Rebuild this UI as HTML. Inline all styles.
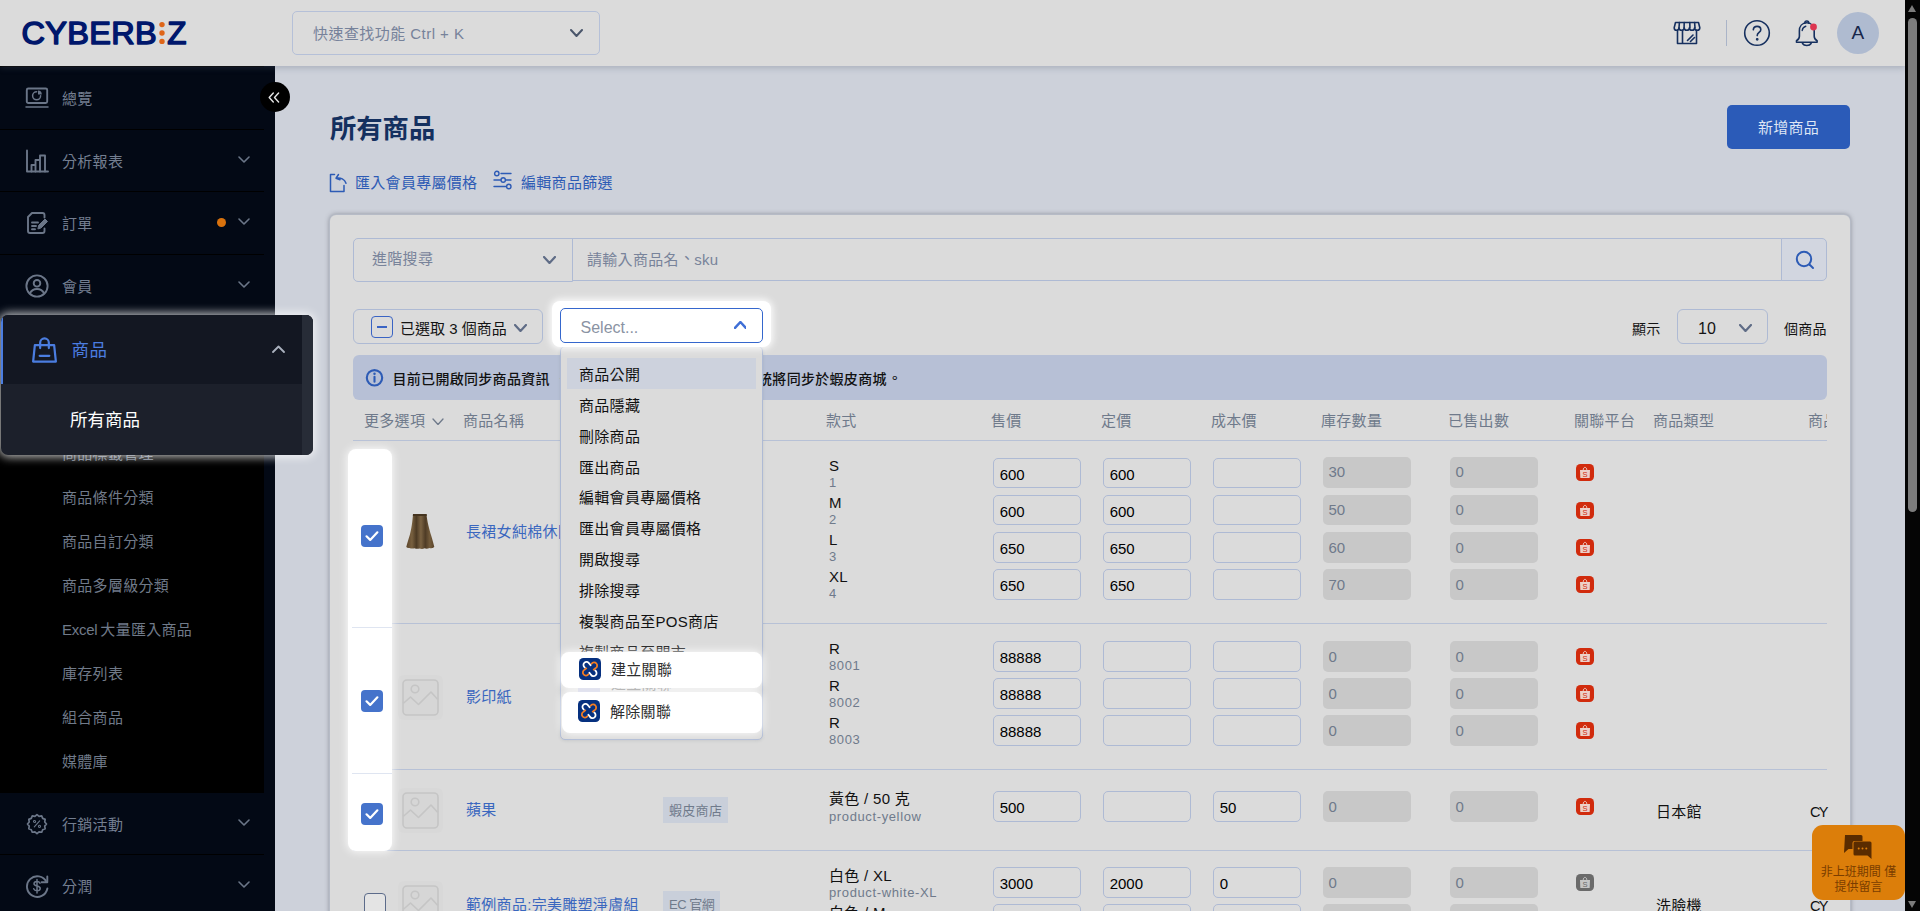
<!DOCTYPE html>
<html lang="zh-Hant">
<head>
<meta charset="utf-8">
<title>所有商品 - CYBERBIZ</title>
<style>
*{box-sizing:border-box;margin:0;padding:0}
html,body{width:1920px;height:911px;overflow:hidden;background:#cdd1da}
body{font-family:"Liberation Sans","Noto Sans CJK TC",sans-serif;font-size:15px;color:#111;position:relative;letter-spacing:.3px}
.abs{position:absolute}
svg{display:block}
.nw{white-space:nowrap}
/* header */
#hdr{position:absolute;left:0;top:0;width:1905px;height:66px;background:#dbdbdb;box-shadow:0 2px 6px rgba(80,90,110,.28);z-index:5}
#qs{position:absolute;left:292px;top:11px;width:308px;height:44px;border:1px solid #b5c0d8;border-radius:5px;color:#76829a;font-size:15px;line-height:43px;padding-left:20px;letter-spacing:.45px}
#ava{position:absolute;left:1837px;top:12px;width:42px;height:42px;border-radius:50%;background:#afbbd0;color:#16264a;font-size:19px;line-height:42px;text-align:center}
/* sidebar */
#side{position:absolute;left:0;top:66px;width:275px;height:845px;background:#030915;z-index:3}
#side .it{position:absolute;left:0;width:264px;height:63px;border-top:1px solid #000;color:#737e90;font-size:15px;letter-spacing:.3px}
#side .it .tx{position:absolute;left:62px;top:0;line-height:64.5px}
#side .it svg.ic{position:absolute;left:25px;top:19px}
#side .it svg.cv{position:absolute;left:238px;top:25px}
#sub{position:absolute;left:0;top:315px;width:264px;height:412px;background:#000}
#sub div{position:absolute;left:62px;margin-top:1px;color:#707a89;font-size:15px;letter-spacing:.3px;line-height:20px;white-space:nowrap}
#clps{position:absolute;left:260px;top:82px;width:30px;height:30px;border-radius:50%;background:#000;z-index:6}
/* scrollbar */
#sb{position:absolute;left:1905px;top:0;width:15px;height:911px;background:#050505;z-index:50}
#sb i{position:absolute;left:3px;top:18px;width:9px;height:494px;border-radius:5px;background:#7c7c7c}
#sb b{position:absolute;left:3px;width:0;height:0;border-left:4.5px solid transparent;border-right:4.5px solid transparent}
/* main */
#ttl{position:absolute;left:330px;top:109.3px;font-size:26.3px;letter-spacing:0;font-weight:700;color:#14305f;line-height:40px}
#addbtn{position:absolute;left:1727px;top:105px;width:123px;height:44px;background:#2b5bb8;border-radius:5px;color:#dfe6f5;font-size:15px;text-align:center;line-height:46px;letter-spacing:.3px}
.lnk{position:absolute;top:172px;font-size:15px;line-height:22px;color:#2d5bb5;white-space:nowrap}
#card{position:absolute;left:330px;top:215px;width:1520px;height:720px;background:#dbdbdb;border-radius:6px;box-shadow:0 0 0 1px #b6bbc6,0 0 4px 1px rgba(85,90,102,.5)}
.gray{color:#6f7a8b}
/* search row */
#adv{position:absolute;left:353px;top:238px;width:220px;height:44px;border:1px solid #aebad4;border-radius:5px 0 0 5px;color:#78839a;font-size:15px;line-height:40.5px;padding-left:18px}
#sin{position:absolute;left:572px;top:238px;width:1210px;height:43px;border:1px solid #aebad4;border-left:none;color:#78839a;font-size:15px;line-height:41px;padding-left:15px}
#sbtn{position:absolute;left:1781px;top:238px;width:46px;height:43px;border:1px solid #aebad4;border-radius:0 5px 5px 0;background:#d2d6e0}
/* toolbar */
#selbtn{position:absolute;left:353px;top:309px;width:190px;height:35px;border:1px solid #aebad4;border-radius:6px;font-size:15px;line-height:38px;letter-spacing:0;color:#141414;white-space:nowrap}
#pp{position:absolute;left:1677px;top:309px;width:91px;height:35px;border:1px solid #aebad4;border-radius:6px;font-size:16px;line-height:37.5px;padding-left:20px;letter-spacing:0;color:#141414}
.tl{position:absolute;top:318px;font-size:14px;line-height:22px;color:#141414;white-space:nowrap}
#ban{position:absolute;left:353px;top:355px;width:1474px;height:45px;border-radius:6px;background:#b7c0d6;font-size:14px;font-weight:500;color:#111;line-height:48.5px;white-space:nowrap;overflow:hidden}
/* table */
.th{position:absolute;top:409.8px;font-size:15px;line-height:22px;color:#6f7a8b;white-space:nowrap}
.hl{position:absolute;left:353px;width:1474px;height:1px;background:#b7c1d6}
.inp{position:absolute;width:88px;height:30px;border:1px solid #aebad4;border-radius:5px;font-size:15px;line-height:31px;padding-left:5.7px;letter-spacing:0;color:#000;white-space:nowrap}
.dis{position:absolute;width:88px;height:30px;border-radius:5px;background:#c8c8c8;font-size:15px;line-height:31px;padding-left:5.5px;letter-spacing:0;color:#6f7a8b}
.vn{position:absolute;left:829px;font-size:15px;line-height:18px;color:#111;white-space:nowrap}
.vs{position:absolute;left:829px;font-size:13px;line-height:16px;color:#6f7a8b;white-space:nowrap;letter-spacing:.62px}
.pn{position:absolute;left:466px;font-size:15px;line-height:22px;color:#3a67bf;white-space:nowrap}
.tag{position:absolute;height:26px;background:#c9cfda;color:#6f7a8b;font-size:13px;line-height:27px;padding:0 6px;white-space:nowrap}
.shp{position:absolute;left:1576px;width:18px;height:17px;border-radius:4.5px;background:#d12b0d;letter-spacing:0}
.shp.off{background:#6a6a6a}
.ph{position:absolute;left:397.5px;width:45px;height:45px;border-radius:6px;background:#d8d8d8}
.cb{position:absolute;left:361px;width:22px;height:22px;border-radius:4px;background:#4573cb}
.cbe{position:absolute;left:364px;width:22px;height:22px;border-radius:4px;border:1.5px solid #5c6b8a;background:#e4e4e4}
.tc{position:absolute;margin-top:1px;font-size:15px;line-height:22px;color:#111;white-space:nowrap}
/* dropdown */
#hlsel{position:absolute;left:551.5px;top:300.5px;width:219px;height:46px;border-radius:8px;background:#fff;box-shadow:0 0 7px 2px rgba(255,255,255,.9);z-index:22}
#sel{position:absolute;left:560px;top:308px;width:203px;height:35px;border:1.5px solid #3567cd;border-radius:5px;background:#fff;z-index:23;font-size:16px;line-height:38px;padding-left:19.5px;color:#8a93a3;letter-spacing:0}
#menu{position:absolute;left:560px;top:346px;width:203px;height:394px;border:1px solid #aebad4;border-radius:5px;background:#dbdbdb;z-index:21;overflow:hidden;box-shadow:0 1px 3px rgba(60,70,90,.12)}
#menu .op{position:absolute;left:6px;width:189px;height:31px;font-size:15px;line-height:33px;padding-left:12px;color:#111;white-space:nowrap}
.hlop{position:absolute;left:561px;width:201px;border-radius:8px;background:#fff;box-shadow:0 0 8px 1px rgba(255,255,255,.85);z-index:23;font-size:15px;color:#2e2e2e;white-space:nowrap}
#hlcol{position:absolute;left:348px;top:449px;width:44px;height:402px;border-radius:8px;background:#fff;box-shadow:0 0 8px 1px rgba(255,255,255,.85);z-index:12}
#hlside{position:absolute;left:.5px;top:315px;width:312.5px;height:140px;border-radius:7px;background:#1c202b;box-shadow:0 0 10px 2px rgba(255,255,255,.75);z-index:30;overflow:hidden}
/* chat */
#chat{position:absolute;left:1812px;top:825px;width:93px;height:75px;border-radius:11px;background:#dc7e0a;z-index:40;color:#7a3d00;font-size:12px;line-height:15.3px;text-align:center;letter-spacing:0}
.pc{position:relative;left:.08em;top:-.1em}.pc3{position:relative;left:.36em;top:-.25em}.pc2{position:relative;left:.05em;top:-.13em}
</style>
</head>
<body>

<div id="hdr">
  <svg class="abs" style="left:18px;top:14px" width="176" height="40" viewBox="0 0 176 40">
    <text x="3.6" y="30.4" font-family="Liberation Sans, sans-serif" font-weight="400" font-size="31.5" fill="#00176c" stroke="#00176c" stroke-width="1.5" stroke-linejoin="round" textLength="135.5" lengthAdjust="spacingAndGlyphs">CYBERB</text>
    <circle cx="144" cy="10.6" r="2.7" fill="#df6518"/><circle cx="144" cy="19" r="2.7" fill="#df6518"/><circle cx="144" cy="27.4" r="2.7" fill="#df6518"/>
    <text x="149.3" y="30.4" font-family="Liberation Sans, sans-serif" font-weight="400" font-size="31.5" fill="#00176c" stroke="#00176c" stroke-width="1.5" stroke-linejoin="round" textLength="19.5" lengthAdjust="spacingAndGlyphs">Z</text>
  </svg>
  <div id="qs">快速查找功能 Ctrl + K</div>
  <svg class="abs " style="left:570px;top:29px;" width="13" height="8" viewBox="0 0 13 8"><path d="M1 1 L6.5 7 L12 1" fill="none" stroke="#4a566b" stroke-width="2" stroke-linecap="round" stroke-linejoin="round"/></svg>
  <!-- store icon -->
  <svg class="abs" style="left:1673px;top:21px" width="28" height="24" viewBox="0 0 28 24" fill="none" stroke="#16305f" stroke-width="1.6" stroke-linejoin="round" stroke-linecap="round">
    <path d="M2.5 1.5h23l1.3 5.2c0 1.6-1.3 2.6-2.6 2.6s-2.6-1-2.6-2.6c0 1.6-1.3 2.6-2.6 2.6s-2.6-1-2.6-2.6c0 1.6-1.3 2.6-2.6 2.6s-2.6-1-2.6-2.6c0 1.6-1.3 2.6-2.6 2.6s-2.6-1-2.6-2.6c0 1.6-1.3 2.6-2.6 2.6S1.2 8.3 1.2 6.7z"/>
    <path d="M6.4 1.5 6 6.7M11.2 1.5 11.1 6.7M16.8 1.5 16.9 6.7M21.6 1.5 22 6.7"/>
    <path d="M4.5 9.5v13h19v-13M4.5 22.5h19M9.5 10v12.5"/>
    <path d="M14.5 19.5l5.5-5.5M17.5 20.5l4-4"/>
  </svg>
  <div class="abs" style="left:1726px;top:20px;width:1px;height:26px;background:#aab4c8"></div>
  <!-- help -->
  <svg class="abs" style="left:1743px;top:19px" width="28" height="28" viewBox="0 0 28 28" fill="none" stroke="#16305f" stroke-width="1.6" stroke-linecap="round">
    <circle cx="14" cy="14" r="12.3"/>
    <path d="M10.3 10.8c.2-2.1 1.7-3.4 3.8-3.4 2.2 0 3.7 1.4 3.7 3.3 0 2.7-3.6 2.9-3.6 5.9"/>
    <circle cx="14.2" cy="20.3" r=".6" fill="#16305f"/>
  </svg>
  <!-- bell -->
  <svg class="abs" style="left:1793px;top:19px" width="28" height="30" viewBox="0 0 28 30" fill="none" stroke="#16305f" stroke-width="1.6" stroke-linecap="round" stroke-linejoin="round">
    <path d="M11.8 4.2c0-1.4.9-2.2 2-2.2s2 .8 2 2.2"/>
    <path d="M13.8 3.8c-4.8 0-7.4 3.6-7.4 8v5.4c0 1.9-1.2 3.6-2.9 4.6v1.4h20.6v-1.4c-1.7-1-2.9-2.7-2.9-4.6v-5.4c0-4.4-2.6-8-7.4-8z"/>
    <path d="M9.5 24.5c.8 1.3 2.4 2 4.3 2s3.5-.7 4.3-2"/>
    <path d="M9.2 11.5c.3-2.2 1.6-3.8 3.6-4.3" stroke-width="1.4"/>
    <circle cx="20.5" cy="8" r="3.4" fill="#dc3550" stroke="none"/>
  </svg>
  <div id="ava">A</div>
</div>


<div id="side">
  <div class="it" style="top:0px"><svg class="ic" width="24" height="24" viewBox="0 0 24 24" fill="none" stroke="#6b7688" stroke-width="1.9" stroke-linecap="round" stroke-linejoin="round" ><rect x="1.8" y="2.5" width="20.4" height="14.5" rx="1.5"/><path d="M1 21h22" stroke-width="1.5"/><path d="M11.6 5.8a4 4 0 1 0 4 4" stroke-width="1.5"/><path d="M13 4.6a3.8 3.8 0 0 1 3.8 3.8H13z" fill="#6b7688" stroke="none"/></svg><span class="tx">總覽</span></div>
  <div class="it" style="top:63px"><svg class="ic" width="24" height="24" viewBox="0 0 24 24" fill="none" stroke="#6b7688" stroke-width="1.9" stroke-linecap="round" stroke-linejoin="round" ><path d="M2 1.5v21h21"/><path d="M6.5 22.5v-6.5h4v6.5M10.5 22.5v-11.5h4.5v11.5M15 22.5v-16h5v16" /></svg><span class="tx">分析報表</span><svg class="abs " style="left:238px;top:26px;" width="12" height="7" viewBox="0 0 12 7"><path d="M1 1 L6 6 L11 1" fill="none" stroke="#6b7688" stroke-width="1.6" stroke-linecap="round" stroke-linejoin="round"/></svg></div>
  <div class="it" style="top:125px"><svg class="ic" width="24" height="24" viewBox="0 0 24 24" fill="none" stroke="#6b7688" stroke-width="1.9" stroke-linecap="round" stroke-linejoin="round" ><path d="M19.5 6.5v-2.5a2 2 0 0 0-2-2h-10.5l-4 4v14a2 2 0 0 0 2 2h12.5a2 2 0 0 0 2-2v-2.5"/><path d="M7 11.5h6M7 15h4M7 18.3h3" stroke-width="1.9"/><path d="M13 17.5l.7-3.2 6.3-6.3 2.5 2.5-6.3 6.3z" fill="#6b7688" stroke-width="1"/></svg><span class="tx">訂單</span><i class="abs" style="left:216.5px;top:26px;width:9px;height:9px;border-radius:50%;background:#d9720d"></i><svg class="abs " style="left:238px;top:26px;" width="12" height="7" viewBox="0 0 12 7"><path d="M1 1 L6 6 L11 1" fill="none" stroke="#6b7688" stroke-width="1.6" stroke-linecap="round" stroke-linejoin="round"/></svg></div>
  <div class="it" style="top:188px"><svg class="ic" width="24" height="24" viewBox="0 0 24 24" fill="none" stroke="#6b7688" stroke-width="1.9" stroke-linecap="round" stroke-linejoin="round" ><circle cx="12" cy="12" r="10.6"/><circle cx="12" cy="9.3" r="3.3"/><path d="M4.8 19.5c1.5-3 4-4.5 7.2-4.5s5.7 1.5 7.2 4.5"/></svg><span class="tx">會員</span><svg class="abs " style="left:238px;top:26px;" width="12" height="7" viewBox="0 0 12 7"><path d="M1 1 L6 6 L11 1" fill="none" stroke="#6b7688" stroke-width="1.6" stroke-linecap="round" stroke-linejoin="round"/></svg></div>
  <div class="it" style="top:251px"><span class="tx">商品</span><svg class="abs " style="left:238px;top:26px;" width="12" height="7" viewBox="0 0 12 7"><path d="M1 1 L6 6 L11 1" fill="none" stroke="#6b7688" stroke-width="1.6" stroke-linecap="round" stroke-linejoin="round"/></svg></div>
  <div id="sub"><div style="top:62px">商品標籤管理</div><div style="top:106px">商品條件分類</div><div style="top:150px">商品自訂分類</div><div style="top:194px">商品多層級分類</div><div style="top:238px"><span style="letter-spacing:-.25px;word-spacing:-1px">Excel </span>大量匯入商品</div><div style="top:282px">庫存列表</div><div style="top:326px">組合商品</div><div style="top:370px">媒體庫</div></div>
  <div class="it" style="top:726px"><svg class="ic" width="24" height="24" viewBox="0 0 24 24" fill="none" stroke="#6b7688" stroke-width="1.9" stroke-linecap="round" stroke-linejoin="round" ><g transform="translate(1.3 1.2) scale(.89)"><path d="M12 1.5l2.3 2 3-.5 1.1 2.8 2.8 1.1-.5 3 2 2.3-2 2.3.5 3-2.8 1.1-1.1 2.8-3-.5-2.3 2-2.3-2-3 .5-1.1-2.8-2.8-1.1.5-3-2-2.3 2-2.3-.5-3 2.8-1.1 1.1-2.8 3 .5z"/><path d="M9 15.3l6-6.6" stroke-width="1.3"/><circle cx="9.3" cy="9.3" r="1.2" stroke-width="1.2"/><circle cx="14.8" cy="14.8" r="1.2" stroke-width="1.2"/></g></svg><span class="tx">行銷活動</span><svg class="abs " style="left:238px;top:26px;" width="12" height="7" viewBox="0 0 12 7"><path d="M1 1 L6 6 L11 1" fill="none" stroke="#6b7688" stroke-width="1.6" stroke-linecap="round" stroke-linejoin="round"/></svg></div>
  <div class="it" style="top:788px"><svg class="ic" width="24" height="24" viewBox="0 0 24 24" fill="none" stroke="#6b7688" stroke-width="1.9" stroke-linecap="round" stroke-linejoin="round" ><path d="M21.5 8a10.3 10.3 0 1 0 .9 6.5"/><path d="M22.3 2.5v5.8h-5.8" /><path d="M15 9.3c-.5-1.2-1.6-1.8-3-1.8-1.7 0-3 .9-3 2.3 0 3 6.2 1.4 6.2 4.6 0 1.4-1.4 2.3-3.2 2.3-1.6 0-2.8-.7-3.3-2M12 5.5v13.5" stroke-width="1.5"/></svg><span class="tx">分潤</span><svg class="abs " style="left:238px;top:26px;" width="12" height="7" viewBox="0 0 12 7"><path d="M1 1 L6 6 L11 1" fill="none" stroke="#6b7688" stroke-width="1.6" stroke-linecap="round" stroke-linejoin="round"/></svg></div>
</div>
<div id="clps"><svg class="abs" style="left:8.3px;top:9.5px" width="12" height="11" viewBox="0 0 12 11" fill="none" stroke="#e6e6e6" stroke-width="1.4" stroke-linecap="round" stroke-linejoin="round"><path d="M5.3 1 1.2 5.5l4.1 4.5M10.6 1 6.5 5.5l4.1 4.5"/></svg></div>
<div id="hlside">
  <div class="abs" style="left:0;top:0;width:312px;height:69px;background:#131722"></div>
  <div class="abs" style="left:301px;top:0;width:11px;height:140px;background:#272c37"></div>
  <div class="abs" style="left:-.5px;top:0;width:3px;height:69px;background:#4b7de0"></div>
  <svg class="abs" style="left:30.5px;top:21.5px" width="27" height="27" viewBox="0 0 28 28" fill="none" stroke="#4b7de0" stroke-width="2.3" stroke-linejoin="round" stroke-linecap="round"><path d="M4 8.5h20l1.8 17h-23.6z"/><path d="M9.5 11.5v-5.5a4.5 4.5 0 0 1 9 0v5.5"/><path d="M9 19.5h10"/></svg>
  <div class="abs nw" style="left:71px;top:21.3px;font-size:17.5px;line-height:28px;color:#4b7de0;letter-spacing:.5px">商品</div>
  <svg class="abs" style="left:271px;top:30px" width="13" height="8" viewBox="0 0 13 8"><path d="M1 7 6.5 1.5 12 7" fill="none" stroke="#aab1be" stroke-width="1.8" stroke-linecap="round" stroke-linejoin="round"/></svg>
  <div class="abs nw" style="left:69.5px;top:91px;font-size:17.5px;line-height:28px;color:#fff;letter-spacing:0">所有商品</div>
</div>
<div id="sb"><b style="top:5px;border-bottom:7px solid #7c7c7c"></b><i></i><b style="top:900.5px;border-top:7px solid #7c7c7c"></b></div>


<div id="ttl">所有商品</div>
<div id="addbtn">新增商品</div>
<svg class="abs" style="left:329px;top:172px" width="19" height="21" viewBox="0 0 19 21" fill="none" stroke="#2d5bb5" stroke-width="1.5" stroke-linecap="round" stroke-linejoin="round"><path d="M5.5 2.5h-4v17h13.5v-6"/><path d="M9.5 2.5l-2.5 3.7 4 1.6M7.2 6.2c4.5-1 8.5 1.2 9.8 5"/></svg>
<div class="lnk" style="left:355px">匯入會員專屬價格</div>
<svg class="abs" style="left:493px;top:170px" width="20" height="20" viewBox="0 0 20 20" fill="none" stroke="#2d5bb5" stroke-width="1.4" stroke-linecap="round"><circle cx="3.8" cy="3.5" r="2.2"/><path d="M8 3.5h10M1 10h6.5M13 10h5M1 16.5h12"/><circle cx="10.2" cy="10" r="2.2"/><circle cx="15.8" cy="16.5" r="2.2"/></svg>
<div class="lnk" style="left:521px">編輯商品篩選</div>
<div id="card"></div>
<div id="adv">進階搜尋</div><svg class="abs " style="left:543px;top:256px;" width="13" height="8" viewBox="0 0 13 8"><path d="M1 1 L6.5 7 L12 1" fill="none" stroke="#5f6c86" stroke-width="2.2" stroke-linecap="round" stroke-linejoin="round"/></svg>
<div id="sin">請輸入商品名<span class="pc2">、</span>sku</div>
<div id="sbtn"><svg class="abs" style="left:12px;top:10px" width="22" height="22" viewBox="0 0 22 22" fill="none" stroke="#2d5bb5" stroke-width="2" stroke-linecap="round"><circle cx="10" cy="10" r="7.2"/><path d="M15.5 15.5l3.5 3.5"/></svg></div>
<div id="selbtn"><span class="abs" style="left:17px;top:6px;width:22px;height:22px;border:1.5px solid #3a64c4;border-radius:4px"></span><span class="abs" style="left:23px;top:16px;width:10px;height:2px;background:#3a64c4"></span><span class="abs" style="left:46px;top:0">已選取 3 個商品</span><svg class="abs " style="left:160px;top:14px;" width="13" height="8" viewBox="0 0 13 8"><path d="M1 1 L6.5 7 L12 1" fill="none" stroke="#5f6c86" stroke-width="2.2" stroke-linecap="round" stroke-linejoin="round"/></svg></div>
<div class="tl" style="left:1632px;margin-top:-.5px">顯示</div>
<div id="pp">10</div><svg class="abs " style="left:1738.5px;top:324px;" width="13" height="8" viewBox="0 0 13 8"><path d="M1 1 L6.5 7 L12 1" fill="none" stroke="#5f6c86" stroke-width="2.2" stroke-linecap="round" stroke-linejoin="round"/></svg>
<div class="tl" style="left:1784px">個商品</div>
<div id="ban"><svg class="abs" style="left:12px;top:13px" width="19" height="19" viewBox="0 0 19 19" fill="none" stroke="#2d5bb5" stroke-width="2.1"><circle cx="9.5" cy="9.8" r="7.7"/><path d="M9.5 8.8v5" stroke-linecap="round" stroke-width="2.1"/><circle cx="9.5" cy="5.7" r="1.25" fill="#2d5bb5" stroke="none"/></svg><span class="abs" style="left:39.5px;top:0">目前已開啟同步商品資訊<span style="letter-spacing:-.12px"><span class="pc3">，</span>商品內容如有更新或異動時，系</span>統將同步於蝦皮商城<span class="pc">。</span></span></div>
<div class="th" style="left:364px">更多選項</div><svg class="abs " style="left:431.5px;top:417.5px;" width="12" height="7.5" viewBox="0 0 12 7.5"><path d="M1 1 L6 6.5 L11 1" fill="none" stroke="#6f7a8b" stroke-width="1.3" stroke-linecap="round" stroke-linejoin="round"/></svg>
<div class="th" style="left:463px">商品名稱</div>
<div class="th" style="left:826px">款式</div>
<div class="th" style="left:991px">售價</div>
<div class="th" style="left:1101px">定價</div>
<div class="th" style="left:1211px">成本價</div>
<div class="th" style="left:1321px">庫存數量</div>
<div class="th" style="left:1448px">已售出數</div>
<div class="th" style="left:1574px">關聯平台</div>
<div class="th" style="left:1653px">商品類型</div>
<div class="th" style="left:1808px;width:19px;overflow:hidden">商品廠商</div>
<div class="hl" style="top:440px"></div>
<div class="hl" style="top:623px"></div>
<div class="hl" style="top:769px"></div>
<div class="hl" style="top:850px"></div>
<div class="vn" style="top:456.5px">S</div><div class="vs" style="top:474.8px">1</div><div class="inp" style="left:993px;top:458px">600</div><div class="inp" style="left:1103px;top:458px">600</div><div class="inp" style="left:1213px;top:458px"></div><div class="dis" style="left:1323px;top:458px;height:31px;margin-top:-1px;line-height:30.8px">30</div><div class="dis" style="left:1450px;top:458px;height:31px;margin-top:-1px;line-height:30.8px">0</div><div class="shp" style="top:463.9px"><svg width="18" height="17" viewBox="0 0 18 17"><path d="M4 6.1h10l-.3 7.3a.6.6 0 0 1-.6.6H4.9a.6.6 0 0 1-.6-.6z" fill="#ecd0c9"/><path d="M7.2 6.3c0-1.9.7-2.9 1.8-2.9s1.8 1 1.8 2.9" fill="none" stroke="#ecd0c9" stroke-width=".9"/><text x="9" y="12.9" font-size="7.6" font-weight="400" text-anchor="middle" fill="#d12b0d" font-family="Liberation Sans, sans-serif">S</text></svg></div><div class="vn" style="top:493.5px">M</div><div class="vs" style="top:511.8px">2</div><div class="inp" style="left:993px;top:495px">600</div><div class="inp" style="left:1103px;top:495px">600</div><div class="inp" style="left:1213px;top:495px"></div><div class="dis" style="left:1323px;top:495px;height:30px;margin-top:0px;line-height:30.8px">50</div><div class="dis" style="left:1450px;top:495px;height:30px;margin-top:0px;line-height:30.8px">0</div><div class="shp" style="top:501.5px"><svg width="18" height="17" viewBox="0 0 18 17"><path d="M4 6.1h10l-.3 7.3a.6.6 0 0 1-.6.6H4.9a.6.6 0 0 1-.6-.6z" fill="#ecd0c9"/><path d="M7.2 6.3c0-1.9.7-2.9 1.8-2.9s1.8 1 1.8 2.9" fill="none" stroke="#ecd0c9" stroke-width=".9"/><text x="9" y="12.9" font-size="7.6" font-weight="400" text-anchor="middle" fill="#d12b0d" font-family="Liberation Sans, sans-serif">S</text></svg></div><div class="vn" style="top:530.5px">L</div><div class="vs" style="top:548.8px">3</div><div class="inp" style="left:993px;top:532px;height:31px">650</div><div class="inp" style="left:1103px;top:532px;height:31px">650</div><div class="inp" style="left:1213px;top:532px;height:31px"></div><div class="dis" style="left:1323px;top:532px;height:31px;margin-top:0px;line-height:31.8px">60</div><div class="dis" style="left:1450px;top:532px;height:31px;margin-top:0px;line-height:31.8px">0</div><div class="shp" style="top:539px"><svg width="18" height="17" viewBox="0 0 18 17"><path d="M4 6.1h10l-.3 7.3a.6.6 0 0 1-.6.6H4.9a.6.6 0 0 1-.6-.6z" fill="#ecd0c9"/><path d="M7.2 6.3c0-1.9.7-2.9 1.8-2.9s1.8 1 1.8 2.9" fill="none" stroke="#ecd0c9" stroke-width=".9"/><text x="9" y="12.9" font-size="7.6" font-weight="400" text-anchor="middle" fill="#d12b0d" font-family="Liberation Sans, sans-serif">S</text></svg></div><div class="vn" style="top:567.5px">XL</div><div class="vs" style="top:585.8px">4</div><div class="inp" style="left:993px;top:569px;height:31px">650</div><div class="inp" style="left:1103px;top:569px;height:31px">650</div><div class="inp" style="left:1213px;top:569px;height:31px"></div><div class="dis" style="left:1323px;top:569px;height:31px;margin-top:0px;line-height:31.8px">70</div><div class="dis" style="left:1450px;top:569px;height:31px;margin-top:0px;line-height:31.8px">0</div><div class="shp" style="top:576px"><svg width="18" height="17" viewBox="0 0 18 17"><path d="M4 6.1h10l-.3 7.3a.6.6 0 0 1-.6.6H4.9a.6.6 0 0 1-.6-.6z" fill="#ecd0c9"/><path d="M7.2 6.3c0-1.9.7-2.9 1.8-2.9s1.8 1 1.8 2.9" fill="none" stroke="#ecd0c9" stroke-width=".9"/><text x="9" y="12.9" font-size="7.6" font-weight="400" text-anchor="middle" fill="#d12b0d" font-family="Liberation Sans, sans-serif">S</text></svg></div><div class="vn" style="top:639.5px">R</div><div class="vs" style="top:657.8px">8001</div><div class="inp" style="left:993px;top:641px;height:31px">88888</div><div class="inp" style="left:1103px;top:641px;height:31px"></div><div class="inp" style="left:1213px;top:641px;height:31px"></div><div class="dis" style="left:1323px;top:641px;height:31px;margin-top:0px;line-height:31.8px">0</div><div class="dis" style="left:1450px;top:641px;height:31px;margin-top:0px;line-height:31.8px">0</div><div class="shp" style="top:648px"><svg width="18" height="17" viewBox="0 0 18 17"><path d="M4 6.1h10l-.3 7.3a.6.6 0 0 1-.6.6H4.9a.6.6 0 0 1-.6-.6z" fill="#ecd0c9"/><path d="M7.2 6.3c0-1.9.7-2.9 1.8-2.9s1.8 1 1.8 2.9" fill="none" stroke="#ecd0c9" stroke-width=".9"/><text x="9" y="12.9" font-size="7.6" font-weight="400" text-anchor="middle" fill="#d12b0d" font-family="Liberation Sans, sans-serif">S</text></svg></div><div class="vn" style="top:676.5px">R</div><div class="vs" style="top:694.8px">8002</div><div class="inp" style="left:993px;top:678px;height:31px">88888</div><div class="inp" style="left:1103px;top:678px;height:31px"></div><div class="inp" style="left:1213px;top:678px;height:31px"></div><div class="dis" style="left:1323px;top:678px;height:31px;margin-top:0px;line-height:31.8px">0</div><div class="dis" style="left:1450px;top:678px;height:31px;margin-top:0px;line-height:31.8px">0</div><div class="shp" style="top:685px"><svg width="18" height="17" viewBox="0 0 18 17"><path d="M4 6.1h10l-.3 7.3a.6.6 0 0 1-.6.6H4.9a.6.6 0 0 1-.6-.6z" fill="#ecd0c9"/><path d="M7.2 6.3c0-1.9.7-2.9 1.8-2.9s1.8 1 1.8 2.9" fill="none" stroke="#ecd0c9" stroke-width=".9"/><text x="9" y="12.9" font-size="7.6" font-weight="400" text-anchor="middle" fill="#d12b0d" font-family="Liberation Sans, sans-serif">S</text></svg></div><div class="vn" style="top:713.5px">R</div><div class="vs" style="top:731.8px">8003</div><div class="inp" style="left:993px;top:715px;height:31px">88888</div><div class="inp" style="left:1103px;top:715px;height:31px"></div><div class="inp" style="left:1213px;top:715px;height:31px"></div><div class="dis" style="left:1323px;top:715px;height:31px;margin-top:0px;line-height:31.8px">0</div><div class="dis" style="left:1450px;top:715px;height:31px;margin-top:0px;line-height:31.8px">0</div><div class="shp" style="top:722px"><svg width="18" height="17" viewBox="0 0 18 17"><path d="M4 6.1h10l-.3 7.3a.6.6 0 0 1-.6.6H4.9a.6.6 0 0 1-.6-.6z" fill="#ecd0c9"/><path d="M7.2 6.3c0-1.9.7-2.9 1.8-2.9s1.8 1 1.8 2.9" fill="none" stroke="#ecd0c9" stroke-width=".9"/><text x="9" y="12.9" font-size="7.6" font-weight="400" text-anchor="middle" fill="#d12b0d" font-family="Liberation Sans, sans-serif">S</text></svg></div><div class="vn" style="top:790.2px">黃色 / 50 克</div><div class="vs" style="top:808.5px">product-yellow</div><div class="inp" style="left:993px;top:791px;height:31px">500</div><div class="inp" style="left:1103px;top:791px;height:31px"></div><div class="inp" style="left:1213px;top:791px;height:31px">50</div><div class="dis" style="left:1323px;top:791px;height:31px;margin-top:0px;line-height:31.8px">0</div><div class="dis" style="left:1450px;top:791px;height:31px;margin-top:0px;line-height:31.8px">0</div><div class="shp" style="top:798px"><svg width="18" height="17" viewBox="0 0 18 17"><path d="M4 6.1h10l-.3 7.3a.6.6 0 0 1-.6.6H4.9a.6.6 0 0 1-.6-.6z" fill="#ecd0c9"/><path d="M7.2 6.3c0-1.9.7-2.9 1.8-2.9s1.8 1 1.8 2.9" fill="none" stroke="#ecd0c9" stroke-width=".9"/><text x="9" y="12.9" font-size="7.6" font-weight="400" text-anchor="middle" fill="#d12b0d" font-family="Liberation Sans, sans-serif">S</text></svg></div><div class="vn" style="top:867px">白色 / XL</div><div class="vs" style="top:885px">product-white-XL</div><div class="inp" style="left:993px;top:867px;height:31px">3000</div><div class="inp" style="left:1103px;top:867px;height:31px">2000</div><div class="inp" style="left:1213px;top:867px;height:31px">0</div><div class="dis" style="left:1323px;top:867px;height:31px;margin-top:0px;line-height:31.8px">0</div><div class="dis" style="left:1450px;top:867px;height:31px;margin-top:0px;line-height:31.8px">0</div><div class="shp off" style="top:874px"><svg width="18" height="17" viewBox="0 0 18 17"><path d="M4 6.1h10l-.3 7.3a.6.6 0 0 1-.6.6H4.9a.6.6 0 0 1-.6-.6z" fill="#c6c6c6"/><path d="M7.2 6.3c0-1.9.7-2.9 1.8-2.9s1.8 1 1.8 2.9" fill="none" stroke="#c6c6c6" stroke-width=".9"/><text x="9" y="12.9" font-size="7.6" font-weight="400" text-anchor="middle" fill="#6a6a6a" font-family="Liberation Sans, sans-serif">S</text></svg></div><div class="vn" style="top:904px">白色 / M</div><div class="vs" style="top:922px">product-white-M</div><div class="inp" style="left:993px;top:904px;height:31px">3000</div><div class="inp" style="left:1103px;top:904px;height:31px">2000</div><div class="inp" style="left:1213px;top:904px;height:31px">0</div><div class="dis" style="left:1323px;top:904px;height:31px;margin-top:0px;line-height:31.8px">0</div><div class="dis" style="left:1450px;top:904px;height:31px;margin-top:0px;line-height:31.8px">0</div><div class="shp off" style="top:911px"><svg width="18" height="17" viewBox="0 0 18 17"><path d="M4 6.1h10l-.3 7.3a.6.6 0 0 1-.6.6H4.9a.6.6 0 0 1-.6-.6z" fill="#c6c6c6"/><path d="M7.2 6.3c0-1.9.7-2.9 1.8-2.9s1.8 1 1.8 2.9" fill="none" stroke="#c6c6c6" stroke-width=".9"/><text x="9" y="12.9" font-size="7.6" font-weight="400" text-anchor="middle" fill="#6a6a6a" font-family="Liberation Sans, sans-serif">S</text></svg></div>
<svg class="abs" style="left:404px;top:512px" width="33" height="38" viewBox="0 0 33 38">
<defs><linearGradient id="sk" x1="0" x2="1" y1="0" y2="0"><stop offset="0" stop-color="#5c452b"/><stop offset=".2" stop-color="#78603f"/><stop offset=".36" stop-color="#4c3a24"/><stop offset=".52" stop-color="#7a6242"/><stop offset=".68" stop-color="#4f3c26"/><stop offset=".84" stop-color="#735b3b"/><stop offset="1" stop-color="#594329"/></linearGradient></defs>
<path d="M9 2H22.5C23 9 25.5 18 27 23C28.5 28 29.6 32 30.3 35Q28 36.8 25.5 36Q23 37.2 20.5 36.3Q18 37.4 15.5 36.4Q13 37.3 10.5 36.2Q8 37 5.5 36Q3.5 36.4 2.3 35C3 32 4.3 28 5.8 23C7.3 18 8.6 9 9 2Z" fill="url(#sk)"/>
<path d="M9 2h13.5l.2 2H8.9z" fill="#45341f"/></svg>
<div class="pn" style="top:521px">長裙女純棉休閒</div>
<div class="ph" style="top:674.5px"><svg class="abs" style="left:4px;top:4px" width="37" height="37" viewBox="0 0 37 37" fill="#d6d6d6" stroke="#c5c5c5" stroke-width="1.6" stroke-linejoin="round"><rect x="1" y="1" width="35" height="35" rx="4"/><circle cx="13" cy="10" r="3.8" fill="none"/><path d="M1.2 24.5l7.3-6.5 8 7.5 12.5-12.5 6.8 7.5" fill="none"/></svg></div>
<div class="pn" style="top:686px">影印紙</div>
<div class="ph" style="top:787.5px"><svg class="abs" style="left:4px;top:4px" width="37" height="37" viewBox="0 0 37 37" fill="#d6d6d6" stroke="#c5c5c5" stroke-width="1.6" stroke-linejoin="round"><rect x="1" y="1" width="35" height="35" rx="4"/><circle cx="13" cy="10" r="3.8" fill="none"/><path d="M1.2 24.5l7.3-6.5 8 7.5 12.5-12.5 6.8 7.5" fill="none"/></svg></div>
<div class="pn" style="top:799px">蘋果</div>
<div class="tag" style="left:663px;top:797px">蝦皮商店</div>
<div class="tc" style="left:1656px;top:800px">日本館</div>
<div class="tc" style="left:1810px;top:800px;letter-spacing:-1.7px;font-size:14.5px">CY</div>
<div class="ph" style="top:880.5px"><svg class="abs" style="left:4px;top:4px" width="37" height="37" viewBox="0 0 37 37" fill="#d6d6d6" stroke="#c5c5c5" stroke-width="1.6" stroke-linejoin="round"><rect x="1" y="1" width="35" height="35" rx="4"/><circle cx="13" cy="10" r="3.8" fill="none"/><path d="M1.2 24.5l7.3-6.5 8 7.5 12.5-12.5 6.8 7.5" fill="none"/></svg></div>
<div class="cbe" style="top:893px"></div>
<div class="pn" style="top:894px">範例商品:完美雕塑淨膚組</div>
<div class="tag" style="left:663px;top:891px;letter-spacing:-.5px">EC 官網</div>
<div class="tc" style="left:1656px;top:894px">洗臉機</div>
<div class="tc" style="left:1810px;top:894px;letter-spacing:-1.7px;font-size:14.5px">CY</div>


<div id="menu"><div class="op" style="top:11px;background:#cdd2dd;">商品公開</div><div class="op" style="top:41.9px;">商品隱藏</div><div class="op" style="top:72.7px;">刪除商品</div><div class="op" style="top:103.6px;">匯出商品</div><div class="op" style="top:134.4px;">編輯會員專屬價格</div><div class="op" style="top:165.2px;">匯出會員專屬價格</div><div class="op" style="top:196.1px;">開啟搜尋</div><div class="op" style="top:227px;">排除搜尋</div><div class="op" style="top:257.8px;">複製商品至POS商店</div><div class="op" style="top:288.7px;">複製商品至門市</div>
  <div class="abs" style="left:17px;top:320px;width:22px;height:30px;border-radius:4px;background:#b9bcd8"></div>
  <div class="op" style="top:320px;left:38px;width:120px;color:#555">建立關聯</div>
</div>
<div id="hlsel"></div>
<div id="sel">Select...</div>
<svg class="abs " style="left:733.5px;top:321.3px;z-index:24;" width="12.8" height="7.8" viewBox="0 0 12.8 7.8"><path d="M1 6.8 L6.4 1 L11.8 6.8" fill="none" stroke="#3f6fd6" stroke-width="2.5" stroke-linecap="round" stroke-linejoin="round"/></svg>
<div class="hlop" style="top:652px;height:36px;line-height:36px"><span class="abs" style="left:50px;top:0">建立關聯</span></div>
<svg class="abs" style="z-index:24;left:579px;top:658px" width="22" height="22" viewBox="0 0 22 22"><rect width="22" height="22" rx="4.5" fill="#06307f"/><g fill="none" stroke-width="1.8" stroke-linecap="round" stroke-linejoin="round"><path d="M12.6 5.75A3.05 3.05 0 1 1 16.5 10.2L14.7 11.6M9.4 16.25A3.05 3.05 0 1 1 5.5 11.8L7.3 10.4" stroke="#f47d22"/><path d="M5.75 9.4A3.05 3.05 0 1 1 10.2 5.5L11.6 7.3M16.25 12.6A3.05 3.05 0 1 1 11.8 16.5L10.4 14.7" stroke="#fff"/></g></svg>
<div class="hlop" style="top:692px;left:562px;width:200px;height:41px;line-height:39px"><span class="abs" style="left:48px;top:0">解除關聯</span></div>
<svg class="abs" style="z-index:24;left:578px;top:700px" width="22" height="22" viewBox="0 0 22 22"><rect width="22" height="22" rx="4.5" fill="#06307f"/><g fill="none" stroke-width="1.8" stroke-linecap="round" stroke-linejoin="round"><path d="M12.6 5.75A3.05 3.05 0 1 1 16.5 10.2L14.7 11.6M9.4 16.25A3.05 3.05 0 1 1 5.5 11.8L7.3 10.4" stroke="#f47d22"/><path d="M5.75 9.4A3.05 3.05 0 1 1 10.2 5.5L11.6 7.3M16.25 12.6A3.05 3.05 0 1 1 11.8 16.5L10.4 14.7" stroke="#fff"/></g></svg>
<div id="hlcol">
  <div class="abs" style="left:4px;top:178px;width:40px;height:1px;background:#dfe5f1"></div>
  <div class="abs" style="left:4px;top:324px;width:40px;height:1px;background:#dfe5f1"></div>
</div>
<div style="position:absolute;left:0;top:0;z-index:13"><div class="cb" style="top:525px"><svg width="22" height="22" viewBox="0 0 22 22"><path d="M5.5 11.3l3.7 3.6 7.2-7.6" fill="none" stroke="#fff" stroke-width="2.2" stroke-linecap="round" stroke-linejoin="round"/></svg></div><div class="cb" style="top:690px"><svg width="22" height="22" viewBox="0 0 22 22"><path d="M5.5 11.3l3.7 3.6 7.2-7.6" fill="none" stroke="#fff" stroke-width="2.2" stroke-linecap="round" stroke-linejoin="round"/></svg></div><div class="cb" style="top:803px"><svg width="22" height="22" viewBox="0 0 22 22"><path d="M5.5 11.3l3.7 3.6 7.2-7.6" fill="none" stroke="#fff" stroke-width="2.2" stroke-linecap="round" stroke-linejoin="round"/></svg></div></div>
<div id="chat">
  <svg class="abs" style="left:31px;top:9px" width="30" height="26" viewBox="0 0 30 26"><path d="M2 1h16a1.5 1.5 0 0 1 1.5 1.5v4.5h-8a2 2 0 0 0-2 2v6h-4l-4.5 4z" fill="#5a2c00"/><path d="M12 7.5h15a1.5 1.5 0 0 1 1.5 1.5v16l-4-3.5h-12.5a1.5 1.5 0 0 1-1.5-1.5v-11a1.5 1.5 0 0 1 1.5-1.5z" fill="#5a2c00"/><circle cx="15.7" cy="14.5" r="1" fill="#dc7e0a"/><circle cx="19.5" cy="14.5" r="1" fill="#dc7e0a"/><circle cx="23.3" cy="14.5" r="1" fill="#dc7e0a"/></svg>
  <div class="abs" style="left:0;top:40px;width:93px">非上班期間 僅<br>提供留言</div>
</div>

</body>
</html>
